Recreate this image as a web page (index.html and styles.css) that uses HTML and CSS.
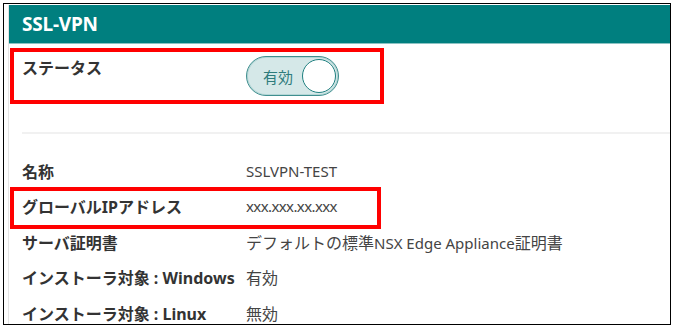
FILE: index.html
```html
<!DOCTYPE html>
<html lang="ja">
<head>
<meta charset="utf-8">
<link rel="stylesheet" href="styles.css">
</head>
<body>
<div class="frame">
  <div class="panel">
    <div class="panel-header">SSL-VPN</div>
    <div class="panel-body">
      <div class="row status-row marked marked-status">
        <div class="label">ステータス</div>
        <div class="toggle">
          <span class="toggle-text">有効</span>
          <span class="knob"></span>
        </div>
      </div>
      <div class="separator"></div>
      <div class="row info-row">
        <div class="label">名称</div>
        <div class="value">SSLVPN-TEST</div>
      </div>
      <div class="row info-row marked marked-ip">
        <div class="label">グローバルIPアドレス</div>
        <div class="value value-ip">xxx.xxx.xx.xxx</div>
      </div>
      <div class="row info-row">
        <div class="label">サーバ証明書</div>
        <div class="value"><span class="ja">デフォルトの標準</span>NSX Edge Appliance<span class="ja">証明書</span></div>
      </div>
      <div class="row info-row">
        <div class="label">インストーラ対象 : Windows</div>
        <div class="value"><span class="ja">有効</span></div>
      </div>
      <div class="row info-row">
        <div class="label">インストーラ対象 : Linux</div>
        <div class="value"><span class="ja">無効</span></div>
      </div>
    </div>
  </div>
</div>
</body>
</html>
```
FILE: styles.css
```css
html, body {
  margin: 0;
  padding: 0;
  background: #ffffff;
}

body {
  font-family: "Noto Sans", "Noto Sans CJK JP", sans-serif;
  color: #333333;
}

.frame {
  margin: 3px 0 0 3px;
  width: 668px;
  height: 322px;
  border: 1px solid #000000;
  box-sizing: border-box;
  padding: 1px 0 0 4px;
  overflow: hidden;
  background: #ffffff;
}

.panel {
  border-left: 1px solid #e4e4e4;
  height: 100%;
}

.panel-header {
  height: 38px;
  background: #007f7f;
  border-bottom: 1px solid #8cc3c3;
  color: #ffffff;
  font-weight: 700;
  font-size: 19px;
  line-height: 38px;
  padding-left: 13px;
  letter-spacing: -0.2px;
}

.panel-body {
  display: flex;
  flex-direction: column;
}

.row {
  display: flex;
  align-items: center;
  position: relative;
}

.label {
  width: 224px;
  flex: none;
  padding-left: 13px;
  font-weight: 700;
  font-size: 16px;
  color: #333333;
  white-space: nowrap;
}

.value {
  font-size: 15px;
  color: #444444;
  white-space: nowrap;
}

.value .ja {
  font-size: 16px;
}

.value-ip {
  letter-spacing: -0.6px;
}

.status-row {
  margin-top: 12px;
  height: 40px;
  align-items: flex-start;
}

.status-row .label {
  line-height: 24px;
}

.toggle {
  width: 93px;
  height: 40px;
  box-sizing: border-box;
  border: 1px solid #3f8f8f;
  box-shadow: inset 0 0 0 1px #b4d6d6;
  border-radius: 20px;
  background: #d5e8e8;
  display: flex;
  align-items: center;
  justify-content: space-between;
  padding: 0 2px 0 16px;
}

.toggle-text {
  font-size: 15px;
  color: #2e7c7c;
}

.knob {
  width: 34px;
  height: 34px;
  box-sizing: border-box;
  border-radius: 50%;
  background: #ffffff;
  border: 1.5px solid #1f8080;
}

.separator {
  margin: 36px 0 0 13px;
  height: 2px;
  background: #f1f1f1;
}

.info-row {
  height: 35.5px;
}

.separator + .info-row {
  margin-top: 19px;
}

.marked::after {
  content: "";
  position: absolute;
  left: 1px;
  border: 4px solid #ff0000;
  box-sizing: border-box;
  pointer-events: none;
}

.marked-status::after {
  top: -8px;
  bottom: -8px;
  width: 374px;
}

.marked-ip::after {
  top: -2px;
  bottom: -5px;
  width: 371px;
}
```
